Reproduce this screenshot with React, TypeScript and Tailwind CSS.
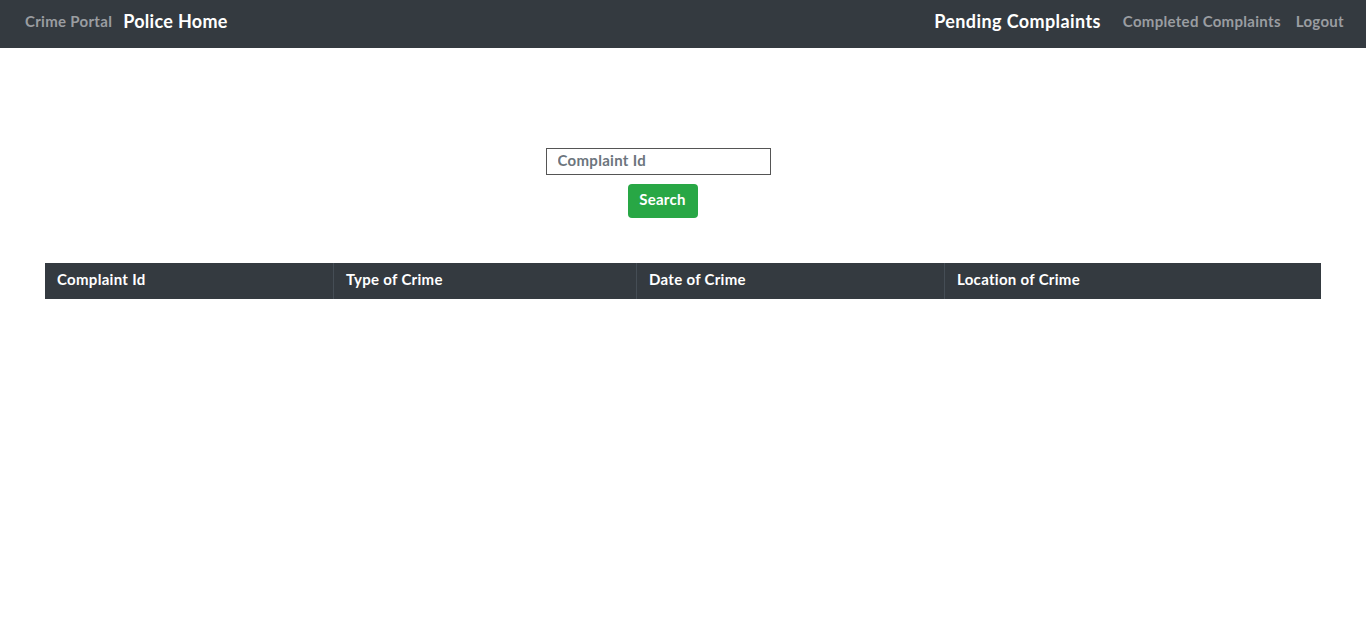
import React from 'react';

const FONT = { fontFamily: 'Lato, "Open Sans", sans-serif' };

const columns = [
  { label: 'Complaint Id', width: 'w-[288px]' },
  { label: 'Type of Crime', width: 'w-[303px]' },
  { label: 'Date of Crime', width: 'w-[308px]' },
  { label: 'Location of Crime', width: 'flex-1' },
];

export default function App() {
  return (
    <div className="min-h-[617px] bg-white tracking-[0.3px]" style={FONT}>
      {/* Navbar */}
      <nav className="h-12 bg-[#343a40] flex items-center justify-between pl-[25px] pr-[22px] pb-[6px]">
        <div className="flex items-center gap-[11px]">
          <span className="text-[15px] font-bold text-[#9a9da1]">Crime Portal</span>
          <span className="text-[18px] font-bold text-white">Police Home</span>
        </div>
        <div className="flex items-center">
          <span className="text-[18px] font-bold text-white mr-[22px] tracking-[0.4px]">Pending Complaints</span>
          <span className="text-[15px] font-bold text-[#9a9da1] mr-[15px]">Completed Complaints</span>
          <span className="text-[15px] font-bold text-[#9a9da1]">Logout</span>
        </div>
      </nav>

      {/* Search */}
      <div className="flex flex-col items-center pt-[100px] pr-[50px]">
        <input
          type="text"
          placeholder="Complaint Id"
          className="w-[225px] h-[27px] border border-[#555] px-[11px] pb-[4px] text-[15px] font-bold tracking-[0.3px] text-[#333] placeholder:text-[#6c757d] outline-none"
          style={FONT}
        />
        <button
          className="mt-[9px] ml-[9px] w-[70px] h-[34px] rounded bg-[#28a745] text-white text-[15px] font-bold pb-[4px]"
          style={FONT}
        >
          Search
        </button>
      </div>

      {/* Table header */}
      <div className="mx-[45px] mt-[45px] h-9 bg-[#343a40] flex text-white text-[15px] font-bold">
        {columns.map((c, i) => (
          <div
            key={c.label}
            className={`${c.width} flex items-center px-3 pb-[3px] ${i > 0 ? 'border-l border-[#454d55]' : ''}`}
          >
            {c.label}
          </div>
        ))}
      </div>
    </div>
  );
}
